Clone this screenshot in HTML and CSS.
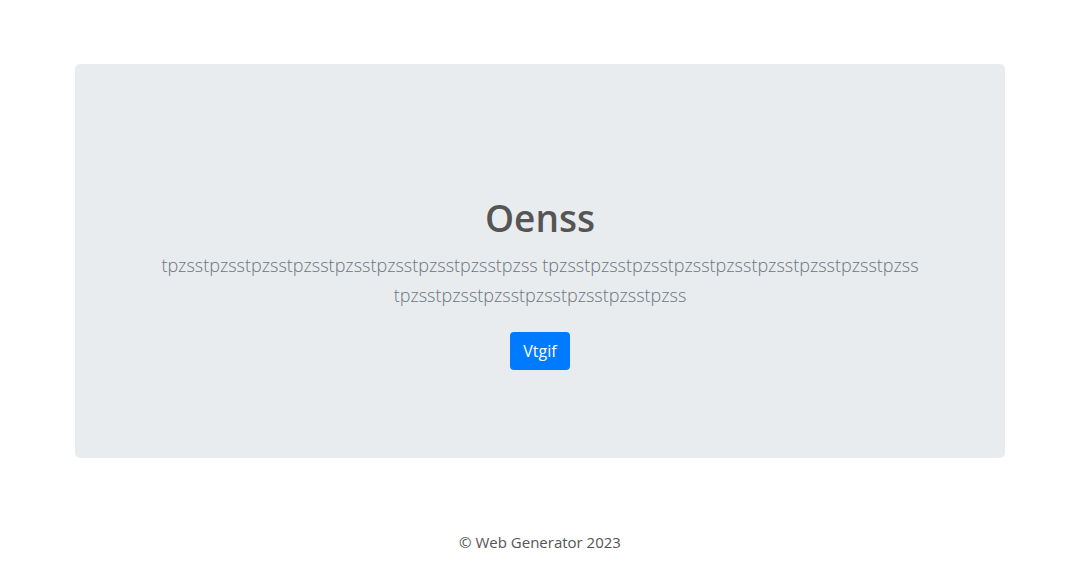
FILE: index.html
```html
<!DOCTYPE html>
<html lang="en">
<head>
<meta charset="utf-8">
<title>Oenss</title>
<link rel="stylesheet" href="styles.css">
</head>
<body>
<main class="container">
  <section class="jumbotron">
    <h1 class="title">Oenss</h1>
    <p class="lead">tpzsstpzsstpzsstpzsstpzsstpzsstpzsstpzsstpzss tpzsstpzsstpzsstpzsstpzsstpzsstpzsstpzsstpzss tpzsstpzsstpzsstpzsstpzsstpzsstpzss</p>
    <a class="btn" href="#">Vtgif</a>
  </section>
</main>
<footer class="footer">© Web Generator 2023</footer>
</body>
</html>
```
FILE: styles.css
```css
* { box-sizing: border-box; }
html, body { margin: 0; padding: 0; }
body {
  font-family: "Open Sans", "Noto Sans", sans-serif;
  font-size: 16px;
  line-height: 1.5;
  color: #555;
  background: #fff;
}
.container {
  width: 960px;
  margin: 0 auto;
  padding: 64px 15px 0;
}
.jumbotron {
  background: #e9ecef;
  border-radius: 5px;
  padding: 130px 32px 88px;
  display: flex;
  flex-direction: column;
  align-items: center;
  text-align: center;
}
.title {
  margin: 0 0 8px;
  font-size: 37px;
  line-height: 48px;
  font-weight: 600;
  color: #555;
}
.lead {
  margin: 0 0 22px;
  font-size: 18px;
  line-height: 30px;
  font-weight: 300;
  color: #6c757d;
}
.btn {
  display: inline-block;
  padding: 6px 13px;
  font-size: 16px;
  line-height: 26px;
  color: #fff;
  background: #007bff;
  border-radius: 4px;
  text-decoration: none;
}
.footer {
  text-align: center;
  margin-top: 72px;
  font-size: 15px;
  line-height: 24px;
  color: #555;
}
```
